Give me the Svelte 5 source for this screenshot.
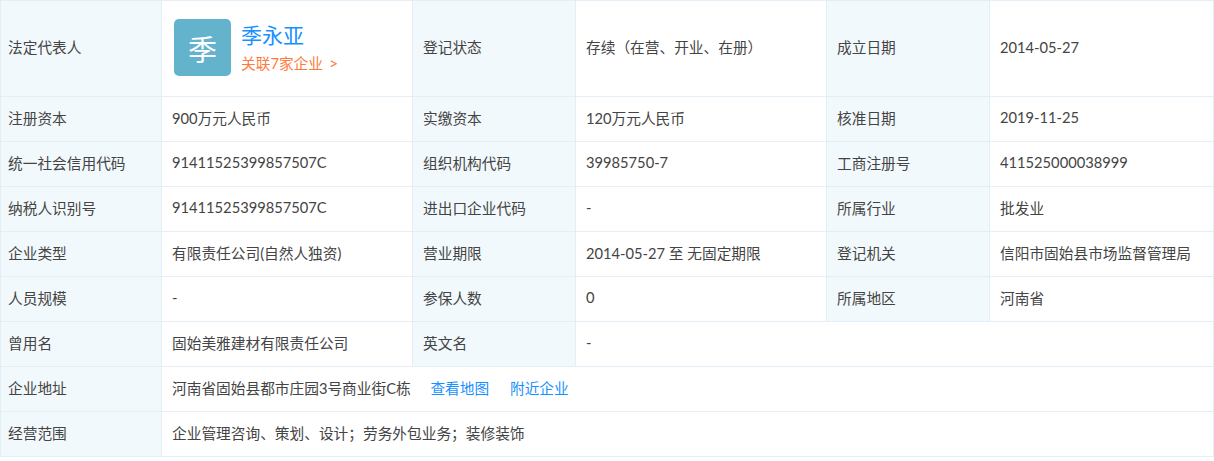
<script>
	const rows = [
		[['注册资本', '900万元人民币'], ['实缴资本', '120万元人民币'], ['核准日期', '2019-11-25']],
		[['统一社会信用代码', '91411525399857507C'], ['组织机构代码', '39985750-7'], ['工商注册号', '411525000038999']],
		[['纳税人识别号', '91411525399857507C'], ['进出口企业代码', '-'], ['所属行业', '批发业']],
		[['企业类型', '有限责任公司(自然人独资)'], ['营业期限', '2014-05-27 至 无固定期限'], ['登记机关', '信阳市固始县市场监督管理局']],
		[['人员规模', '-'], ['参保人数', '0'], ['所属地区', '河南省']]
	];
</script>

<table>
	<colgroup>
		<col style="width: 161px" />
		<col style="width: 251px" />
		<col style="width: 163px" />
		<col style="width: 251px" />
		<col style="width: 163px" />
		<col />
	</colgroup>
	<tbody>
		<tr class="first">
			<th>法定代表人</th>
			<td>
				<div class="person">
					<div class="avatar">季</div>
					<div class="info">
						<a class="name" href="#top">季永亚</a>
						<a class="related" href="#top"><span class="line">关联7家企业</span><span class="arrow">&gt;</span></a>
					</div>
				</div>
			</td>
			<th>登记状态</th>
			<td>存续（在营、开业、在册）</td>
			<th>成立日期</th>
			<td>2014-05-27</td>
		</tr>
		{#each rows as row}
			<tr>
				{#each row as cell}
					<th>{cell[0]}</th>
					<td>{cell[1]}</td>
				{/each}
			</tr>
		{/each}
		<tr>
			<th>曾用名</th>
			<td>固始美雅建材有限责任公司</td>
			<th>英文名</th>
			<td colspan="3">-</td>
		</tr>
		<tr>
			<th>企业地址</th>
			<td colspan="5">
				河南省固始县都市庄园3号商业街C栋
				<a class="link first-link" href="#top">查看地图</a>
				<a class="link" href="#top">附近企业</a>
			</td>
		</tr>
		<tr>
			<th>经营范围</th>
			<td colspan="5">企业管理咨询、策划、设计；劳务外包业务；装修装饰</td>
		</tr>
	</tbody>
</table>

<style>
	:global(body) {
		margin: 0;
		background: #fff;
	}

	table {
		width: 1214px;
		table-layout: fixed;
		border-collapse: collapse;
		font-family: 'Lato', 'Noto Sans CJK SC', sans-serif;
		font-size: 14.7px;
		color: #444;
	}

	tr {
		height: 45px;
	}

	tr.first {
		height: 96px;
	}

	th,
	td {
		border: 1px solid #e4eef6;
		padding: 0 10px 4px;
		box-sizing: border-box;
		text-align: left;
		font-weight: 400;
		white-space: nowrap;
	}

	th {
		background: #f2f9fc;
		padding-left: 10px;
	}

	th:first-child {
		padding-left: 7px;
	}

	.person {
		display: flex;
		align-items: center;
		gap: 10px;
		padding-left: 2px;
		margin-top: 2px;
	}

	.avatar {
		width: 57px;
		height: 57px;
		border-radius: 5px;
		background: #63b3cd;
		color: #fff;
		font-size: 29px;
		display: flex;
		align-items: center;
		justify-content: center;
	}

	.info {
		display: flex;
		flex-direction: column;
		gap: 4px;
		margin-bottom: 2px;
	}

	a {
		text-decoration: none;
	}

	.name {
		font-size: 21px;
		line-height: 28px;
		color: #1890ff;
	}

	.related {
		font-size: 14.7px;
		line-height: 20px;
		color: #ff7a3d;
	}

	.arrow {
		font-size: 16px;
		margin-left: 6px;
	}

	.link {
		color: #1890ff;
		margin-left: 17px;
	}

	.first-link {
		margin-left: 16px;
	}
</style>
